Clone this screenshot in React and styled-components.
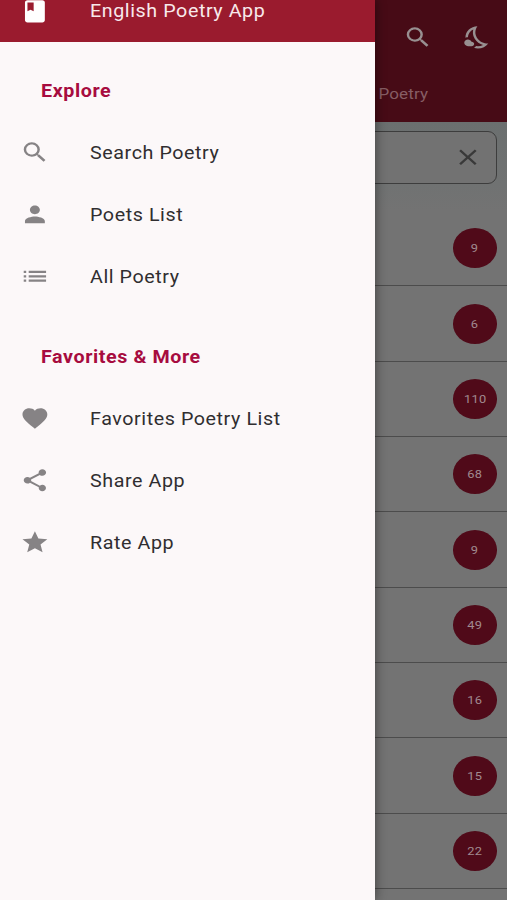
import React from 'react';

import {
  MdBook,
  MdClose,
  MdFavorite,
  MdGrade,
  MdList,
  MdOutlineNightsStay,
  MdPerson,
  MdSearch,
  MdShare,
} from 'react-icons/md';
import styled, { createGlobalStyle } from 'styled-components';

const GlobalStyle = createGlobalStyle`
  * {
    box-sizing: border-box;
  }

  body {
    margin: 0;
    font-family: Roboto, sans-serif;
  }
`;

const Screen = styled.div`
  position: relative;
  width: 507px;
  height: 900px;
  overflow: hidden;
  background: #737373;
`;

const Page = styled.main`
  display: flex;
  flex-direction: column;
`;

const AppBar = styled.header`
  height: 122px;
  background: #470b16;
  color: #989091;
`;

const Toolbar = styled.div`
  display: flex;
  justify-content: flex-end;
  align-items: center;
  gap: 29.4px;
  height: 75px;
  padding-right: 14.6px;
`;

const Tabs = styled.div`
  display: flex;
  justify-content: flex-end;
  padding-right: 79px;
  line-height: 39px;
`;

const Tab = styled.span`
  font-size: 15.5px;
  letter-spacing: 0.1px;
  color: #865d64;
  transform: scaleX(1.1);
  transform-origin: right;
`;

const SearchArea = styled.div`
  height: 89px;
  padding: 8.6px 10px 0;
  background: linear-gradient(#6b6f6f, #707272 70%, #737373);
`;

const SearchField = styled.div`
  display: flex;
  justify-content: flex-end;
  align-items: center;
  height: 53px;
  padding-right: 13.4px;
  border: 1.3px solid #3d3d3d;
  border-radius: 9px;
  background: #727272;
  color: #393939;
`;

const PoetRow = styled.div`
  display: flex;
  justify-content: flex-end;
  align-items: center;
  height: 75.35px;
  padding-right: 10px;
  border-bottom: 1.3px solid #4c4c4c;
`;

const Count = styled.div`
  display: flex;
  justify-content: center;
  align-items: center;
  width: 44.5px;
  height: 40px;
  border-radius: 50%;
  background: #500a19;
  color: #a18b90;
  font-size: 11.7px;
  letter-spacing: 0.25px;

  span {
    transform: scaleX(1.1);
  }
`;

const Drawer = styled.aside`
  position: absolute;
  top: 0;
  left: 0;
  width: 375px;
  height: 900px;
  background: #fcf8f9;
  box-shadow: 1px 0 10px rgba(0, 0, 0, 0.4);
`;

const DrawerHeader = styled.div`
  display: flex;
  align-items: center;
  height: 42px;
  padding: 0 0 20px 20.4px;
  background: #9a1b2e;
  color: #fff;
`;

const SectionTitle = styled.h2`
  height: 80px;
  margin: 0;
  padding: 37px 0 0 40.5px;
  font-size: 17.7px;
  font-weight: 700;
  line-height: 24px;
  color: #a70c3f;

  span {
    display: inline-block;
    letter-spacing: 0.53px;
    transform: scaleX(1.113);
    transform-origin: left;
  }
`;

const MenuItem = styled.div`
  display: flex;
  align-items: center;
  height: 62px;
  padding-left: 20.4px;
  color: #868385;

  svg {
    margin-bottom: 1px;
  }
`;

const Label = styled.span`
  margin-left: 39.6px;
  font-size: 17.7px;
  letter-spacing: 0.52px;
  color: ${({ $color }) => $color || '#302e30'};
  transform: scaleX(1.113);
  transform-origin: left;
`;

const IconBox = styled.span`
  display: flex;
  flex: none;

  svg {
    width: 29.8px;
    height: 26.6px;
  }
`;

const explore = [
  { icon: MdSearch, label: 'Search Poetry' },
  { icon: MdPerson, label: 'Poets List' },
  { icon: MdList, label: 'All Poetry' },
];

const more = [
  { icon: MdFavorite, label: 'Favorites Poetry List' },
  { icon: MdShare, label: 'Share App' },
  { icon: MdGrade, label: 'Rate App' },
];

const counts = [9, 6, 110, 68, 9, 49, 16, 15, 22];

const Icon = ({ as: Glyph }) => (
  <IconBox>
    <Glyph preserveAspectRatio='none' />
  </IconBox>
);

const Menu = ({ items }) =>
  items.map(({ icon, label }) => (
    <MenuItem key={label}>
      <Icon as={icon} />
      <Label>{label}</Label>
    </MenuItem>
  ));

export default function App() {
  return (
    <Screen>
      <GlobalStyle />
      <Page>
        <AppBar>
          <Toolbar>
            <Icon as={MdSearch} />
            <Icon as={MdOutlineNightsStay} />
          </Toolbar>
          <Tabs>
            <Tab>Poetry</Tab>
          </Tabs>
        </AppBar>
        <SearchArea>
          <SearchField>
            <Icon as={MdClose} />
          </SearchField>
        </SearchArea>
        {counts.map((count, index) => (
          <PoetRow key={index}>
            <Count>
              <span>{count}</span>
            </Count>
          </PoetRow>
        ))}
      </Page>
      <Drawer>
        <DrawerHeader>
          <Icon as={MdBook} />
          <Label $color='#f8e9eb'>English Poetry App</Label>
        </DrawerHeader>
        <SectionTitle>
          <span>Explore</span>
        </SectionTitle>
        <Menu items={explore} />
        <SectionTitle>
          <span>Favorites &amp; More</span>
        </SectionTitle>
        <Menu items={more} />
      </Drawer>
    </Screen>
  );
}
